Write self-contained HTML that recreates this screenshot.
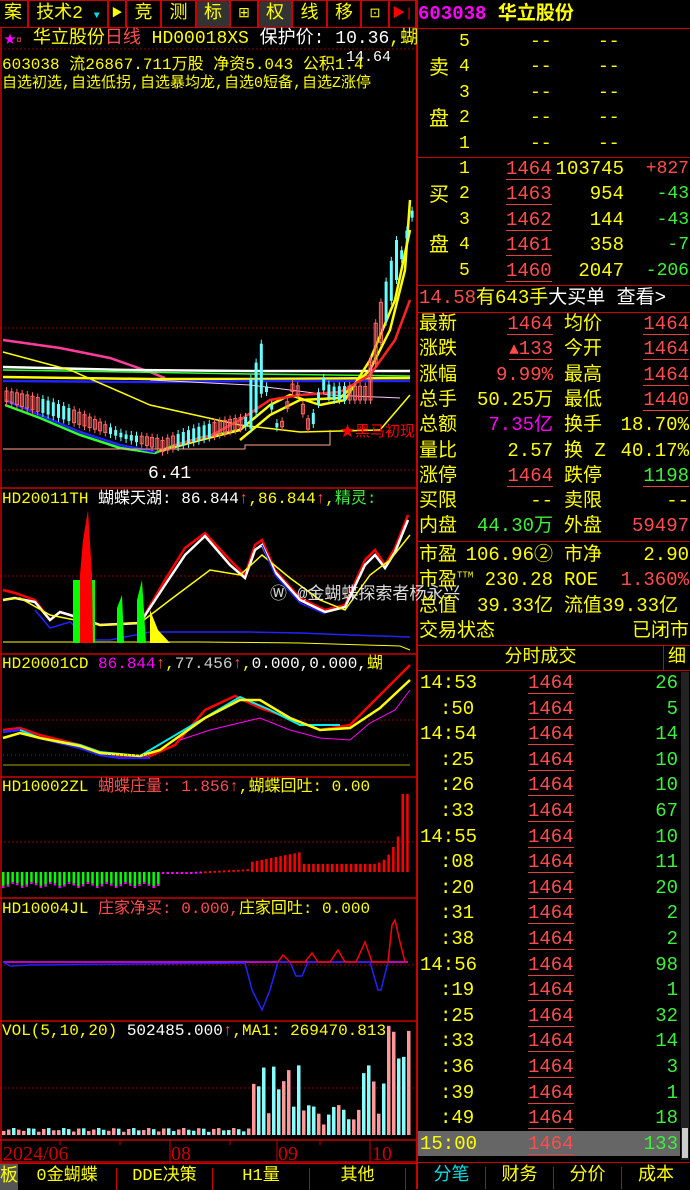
<!DOCTYPE html>
<html><head><meta charset="utf-8"><style>
*{margin:0;padding:0;box-sizing:border-box}
body{width:690px;height:1189px;background:#000;overflow:hidden;position:relative;font-family:"Liberation Mono","Noto Sans CJK SC",monospace;color:#ff0}
.a{position:absolute;white-space:nowrap;line-height:1}
.y{color:#ffff00}.r{color:#ff4c4c}.g{color:#3cf03c}.w{color:#fff}.m{color:#ff00ff}.c{color:#00e0e0}
.tb{position:absolute;top:0;height:28px;border:1px solid #c00;background:#000;color:#ff0;font-size:18px;text-align:center;line-height:26px}
.ul{border-bottom:1px solid #e04040}
</style></head><body>
<div class="tb" style="left:-2px;width:30px">案</div>
<div class="tb" style="left:28px;width:80px">技术2 <span class="c" style="font-size:10px">▼</span></div>
<div class="tb" style="left:108px;width:18px;font-size:11px">▶</div>
<div class="tb" style="left:126px;width:35px">竞</div>
<div class="tb" style="left:161px;width:35px">测</div>
<div class="tb" style="left:196px;width:34px;background:#333">标</div>
<div class="tb" style="left:230px;width:28px;font-size:14px">⊞</div>
<div class="tb" style="left:258px;width:34px;background:#333">权</div>
<div class="tb" style="left:292px;width:35px">线</div>
<div class="tb" style="left:327px;width:34px">移</div>
<div class="tb" style="left:361px;width:28px;font-size:13px">⊡</div>
<div class="tb" style="left:389px;width:27px;color:#f00;font-size:13px">▶|</div>
<div style="position:absolute;left:416px;top:0;width:2px;height:1189px;background:#c00"></div>

<svg style="position:absolute;left:0;top:0" width="416" height="1189">
<g stroke="#800" stroke-dasharray="2,2" stroke-width="1">
<line x1="0" y1="49" x2="416" y2="49"/><line x1="0" y1="328" x2="416" y2="328"/><line x1="0" y1="470" x2="416" y2="470"/>
<line x1="0" y1="576" x2="416" y2="576"/><line x1="0" y1="720" x2="416" y2="720"/><line x1="0" y1="842" x2="416" y2="842"/>
<line x1="0" y1="965" x2="416" y2="965"/><line x1="0" y1="1088" x2="416" y2="1088"/>
</g>
<g stroke="#c00" stroke-width="1.5">
<line x1="0" y1="488" x2="416" y2="488"/><line x1="0" y1="654" x2="416" y2="654"/><line x1="0" y1="777" x2="416" y2="777"/>
<line x1="0" y1="898" x2="416" y2="898"/><line x1="0" y1="1021" x2="416" y2="1021"/><line x1="0" y1="1140" x2="416" y2="1140"/>
<line x1="0" y1="1162" x2="416" y2="1162"/><line x1="1" y1="28" x2="1" y2="1162"/>
</g>
<g stroke="#c00" stroke-width="1">
<line x1="60" y1="1140" x2="60" y2="1145"/><line x1="120" y1="1140" x2="120" y2="1145"/><line x1="170" y1="1140" x2="170" y2="1162"/><line x1="230" y1="1140" x2="230" y2="1145"/><line x1="277" y1="1140" x2="277" y2="1162"/><line x1="320" y1="1140" x2="320" y2="1145"/><line x1="370" y1="1140" x2="370" y2="1162"/>
</g>
<g fill="none" stroke-width="2.5">
<polyline stroke="#ff3c9c" points="3,340 60,348 110,358 150,372 165,378"/>
<polyline stroke="#fff" points="3,367 130,370 250,371 410,371"/>
<polyline stroke="#3f3" stroke-width="1.5" points="3,370 130,372 250,374 410,376"/>
<polyline stroke="#ff0" points="3,377 150,379 250,379 410,378"/>
<polyline stroke="#22f" points="3,381 150,382 260,381 410,381"/>
<polyline stroke="#ff0" stroke-width="1.5" points="3,352 70,370 150,405 240,425 300,432 380,430 410,395"/>
<polyline stroke="#f8c8f8" stroke-width="1" points="150,380 250,385 330,395 400,398"/>
<polyline stroke="#3f3" points="5,405 40,418 80,435 120,448 155,453 175,445 200,438 240,430"/>
<polyline stroke="#22f" points="5,400 40,415 80,432 120,445 155,452"/>
<polyline stroke="#ff0" points="160,451 200,440 240,430 270,405 290,395 320,405 345,400 370,360 395,300 410,230"/>
<polyline stroke="#ff0" points="240,440 270,415 300,400 340,398 370,370 390,330 405,270 410,200"/>
<polyline stroke="#f22" points="175,445 210,436 240,420 270,400 300,395 340,392 370,375 395,340 410,300"/>
<polyline stroke="#fa8" stroke-width="1" points="3,449 245,449 245,445 330,445 330,430"/>
</g>
<g id="cand"></g>
<text x="148" y="478" fill="#fff" font-size="18" font-family="Liberation Mono">6.41</text>
<text x="340" y="436" fill="#f00" font-size="15" font-family="Noto Sans CJK SC">★黑马初现</text>
<g fill="none" stroke-width="2.5">
<polyline stroke="#f00" points="3,590 15,593 35,600 50,620 60,612 80,618 100,625 140,623 165,580 185,548 205,533 230,560 245,575 255,545 262,540 275,570 300,598 325,610 345,605 365,560 375,550 385,565 395,548 408,515"/>
<polyline stroke="#fff" points="3,600 15,598 35,602 50,620 60,612 80,618 100,625 140,623 165,585 185,555 205,536 230,565 245,578 255,550 262,545 275,572 300,600 325,612 345,607 365,565 375,555 385,568 395,552 408,520"/>
<polyline stroke="#ff0" stroke-width="1.5" points="3,600 20,598 50,615 100,625 140,623 170,600 210,570 240,575 262,555 290,578 320,600 345,610 370,575 390,560 410,535"/>
<polyline stroke="#22f" stroke-width="1.5" points="35,610 50,628 70,622 90,640 110,640 150,632 250,632 300,633 350,635 410,637"/>
<polyline stroke="#ff0" stroke-width="1" points="3,642 200,642 300,643 400,646 410,650"/>
<polyline stroke="#22f" stroke-width="1.5" points="262,545 275,575 300,603 325,614"/>
<polyline stroke="#f00" points="3,730 20,728 40,735 80,745 100,752 120,756 150,756 175,745 205,710 235,696 260,708 290,718 320,730 350,725 380,695 410,665"/>
<polyline stroke="#22f" points="3,732 20,730 40,738 80,748 100,755 120,758 150,758"/>
<polyline stroke="#0ee" stroke-width="2" points="20,730 40,738 80,745 100,752 140,756 240,697 270,710 300,725 340,725"/>
<polyline stroke="#ff0" points="3,738 20,733 40,738 80,746 100,753 140,756 160,750 205,718 240,700 260,700 290,718 320,730 350,728 380,708 410,680"/>
<polyline stroke="#f0f" stroke-width="1" points="180,740 210,730 260,718 290,730 320,738 350,740 370,723 395,710 410,690"/>
<line x1="3" y1="765" x2="410" y2="765" stroke="#aa0" stroke-width="1"/>
<line x1="3" y1="755" x2="410" y2="755" stroke="#22f" stroke-width="1" stroke-dasharray="1,3"/>
<line x1="3" y1="962" x2="408" y2="962" stroke="#f0f" stroke-width="1.5"/>
<polyline stroke="#22f" stroke-width="1.5" points="3,962 10,966 30,965 245,963 252,990 262,1010 270,990 278,962 290,962 296,976 302,976 308,962 370,962 378,990 381,990 388,962"/>
<polyline stroke="#f00" stroke-width="1.5" points="278,962 283,955 290,962 305,962 312,953 318,962 330,962 338,950 345,962 356,962 365,942 372,962 388,962 392,925 395,920 400,942 405,962"/>
</g>
<polygon points="73,643 73,580 95,580 95,643" fill="#0f0"/>
<polygon points="80,643 80,575 83,540 88,510 92,575 93,643" fill="#f00"/>
<polygon points="117,643 117,608 122,595 124,643" fill="#0f0"/>
<polygon points="137,643 137,600 142,580 146,643" fill="#0f0"/>
<polygon points="150,643 150,610 158,630 170,643" fill="#ff0"/>
<g id="bars"></g>
<g fill="#c00" font-size="20" font-family="Liberation Serif"><text x="3" y="1160">2024/06</text><text x="171" y="1160">08</text><text x="278" y="1160">09</text><text x="372" y="1160">10</text></g>
</svg>
<div class="a" style="left:4px;top:30px;font-size:18px"><span class="m" style="font-size:12px">★</span><span class="r" style="font-size:10px">¤</span> 华立股份<span class="r">日线</span> HD00018XS <span class="w">保护价: 10.36</span>,蝴</div>
<div class="a w" style="left:346px;top:50px;font-size:15px">14.64</div>
<div class="a" style="left:2px;top:57px;font-size:16px">603038 流26867.711万股 净资5.043 公积1.4</div>
<div class="a" style="left:2px;top:76px;font-size:15px">自选初选,自选低拐,自选暴均龙,自选0短备,自选Z涨停</div>
<div class="a" style="left:2px;top:491px;font-size:16px">HD20011TH <span class="w">蝴蝶天湖: 86.844</span><span class="r">↑</span>,86.844<span class="r">↑</span>,<span class="g">精灵:</span></div>
<div class="a" style="left:2px;top:656px;font-size:16px">HD20001CD <span class="m">86.844</span><span class="r">↑</span>,<span style="color:#ccc">77.456</span><span class="r">↑</span>,<span class="w">0.000,0.000,</span>蝴</div>
<div class="a" style="left:2px;top:779px;font-size:16px">HD10002ZL <span class="r">蝴蝶庄量: 1.856</span><span class="r">↑</span>,蝴蝶回吐: 0.00</div>
<div class="a" style="left:2px;top:901px;font-size:16px">HD10004JL <span class="r">庄家净买: 0.000,</span>庄家回吐: 0.000</div>
<div class="a" style="left:2px;top:1023px;font-size:16px">VOL(5,10,20) <span class="w">502485.000</span><span class="r">↑</span>,MA1: 269470.813</div>
<div class="a w" style="left:270px;top:587px;font-size:17px;opacity:.85">Ⓦ @金蝴蝶探索者杨永兴</div>
<div style="position:absolute;left:0;top:1163px;width:416px;height:26px;border-top:1px solid #c00">
<div class="a" style="left:0;top:0;width:18px;height:26px;background:#555;font-size:18px;line-height:26px">板</div>
<div class="a" style="left:18px;top:4px;width:99px;text-align:center;font-size:17px;border-right:1px solid #c00;height:22px">0金蝴蝶</div>
<div class="a" style="left:117px;top:4px;width:96px;text-align:center;font-size:17px;border-right:1px solid #c00;height:22px">DDE决策</div>
<div class="a" style="left:213px;top:4px;width:97px;text-align:center;font-size:17px;border-right:1px solid #c00;height:22px">H1量</div>
<div class="a" style="left:310px;top:4px;width:96px;text-align:center;font-size:17px;border-right:1px solid #c00;height:22px">其他</div>
</div>

<div class="a" style="left:418px;top:5px;font-size:19px;font-weight:bold"><span class="m">603038</span> 华立股份</div>
<div style="position:absolute;left:418px;top:28px;width:272px;height:1px;background:#c00"></div>
<div id="ob"></div>
<div style="position:absolute;left:418px;top:285px;width:272px;height:1px;background:#c00"></div>
<div class="a" style="left:419px;top:289px;font-size:19px"><span class="r">14.58</span>有643手<span class="w">大买单 查看&gt;</span></div>
<div style="position:absolute;left:418px;top:312px;width:272px;height:1px;background:#c00"></div>
<div id="st"></div>
<div style="position:absolute;left:418px;top:541px;width:272px;height:1px;background:#c00"></div>
<div style="position:absolute;left:418px;top:645px;width:272px;height:1px;background:#c00"></div>
<div class="a" style="left:418px;top:646px;width:245px;text-align:center;font-size:18px;line-height:24px">分时成交</div>
<div class="a" style="left:663px;top:646px;width:27px;border-left:1px solid #c00;text-align:center;font-size:18px;line-height:24px">细</div>
<div style="position:absolute;left:418px;top:670px;width:272px;height:1px;background:#c00"></div>
<div style="position:absolute;left:418px;top:1131px;width:262px;height:25px;background:#666"></div>
<div style="position:absolute;left:681px;top:672px;width:8px;height:488px;background:#222"></div>
<div style="position:absolute;left:682px;top:1128px;width:6px;height:30px;background:#ccc"></div>
<div id="tk"></div>
<div style="position:absolute;left:418px;top:1162px;width:272px;height:27px;border-top:1px solid #c00">
<div class="a c" style="left:0;top:4px;width:68px;text-align:center;font-size:18px;border-right:1px solid #c00;height:22px">分笔</div>
<div class="a" style="left:68px;top:4px;width:68px;text-align:center;font-size:18px;border-right:1px solid #c00;height:22px">财务</div>
<div class="a" style="left:136px;top:4px;width:68px;text-align:center;font-size:18px;border-right:1px solid #c00;height:22px">分价</div>
<div class="a" style="left:204px;top:4px;width:68px;text-align:center;font-size:18px;height:22px">成本</div>
</div>
<script>
var h='';
var L=['5','4','3','2','1'];
h+='<div class="a" style="left:429px;top:60px;font-size:20px">卖</div><div class="a" style="left:429px;top:111px;font-size:20px">盘</div>';
for(var i=0;i<5;i++){var t=33+i*25.4;h+='<div class="a" style="left:459px;top:'+t+'px;font-size:18px">'+L[i]+'</div><div class="a" style="left:530px;top:'+t+'px;font-size:18px">--</div><div class="a" style="left:598px;top:'+t+'px;font-size:18px">--</div>';}
h+='<div style="position:absolute;left:418px;top:157px;width:272px;height:1px;background:#c00"></div>';
h+='<div class="a" style="left:429px;top:187px;font-size:20px">买</div><div class="a" style="left:429px;top:237px;font-size:20px">盘</div>';
var B=[['1464','103745','+827'],['1463','954','-43'],['1462','144','-43'],['1461','358','-7'],['1460','2047','-206']];
for(i=0;i<5;i++){var t=160+i*25.4;h+='<div class="a" style="left:459px;top:'+t+'px;font-size:18px">'+(i+1)+'</div><div class="a r ul" style="left:506px;top:'+t+'px;font-size:19px">'+B[i][0]+'</div><div class="a" style="right:66px;top:'+t+'px;font-size:19px">'+B[i][1]+'</div><div class="a '+(i?'g':'r')+'" style="right:1px;top:'+t+'px;font-size:18px">'+B[i][2]+'</div>';}
document.getElementById('ob').innerHTML=h;
h='';
var S=[['最新','1464','r ul','均价','1464','r ul'],['涨跌','▴133','r ul','今开','1464','r ul'],['涨幅','9.99%','r','最高','1464','r ul'],['总手','50.25万','y','最低','1440','r ul'],['总额','7.35亿','m','换手','18.70%','y'],['量比','2.57','y','换 Z','40.17%','y'],['涨停','1464','r ul','跌停','1198','g ul'],['买限','--','y','卖限','--','y'],['内盘','44.30万','g','外盘','59497','r'],['市盈','106.96②','y','市净','2.90','y'],['市盈<sup style="font-size:9px">TTM</sup>','230.28','y','ROE','1.360%','r'],['总值','39.33亿','y','流值39.33亿','','y'],['交易状态','','y','','已闭市','y']];
for(i=0;i<S.length;i++){var t=(i<9?315+i*25.3:546+(i-9)*25.3);var s=S[i];
h+='<div class="a" style="left:419px;top:'+t+'px;font-size:19px">'+s[0]+'</div><div class="a '+s[2]+'" style="right:137px;top:'+t+'px;font-size:19px">'+s[1]+'</div><div class="a" style="left:564px;top:'+t+'px;font-size:19px">'+s[3]+'</div><div class="a '+s[5]+'" style="right:1px;top:'+t+'px;font-size:19px">'+s[4]+'</div>';}
document.getElementById('st').innerHTML=h;
h='';
var T=['14:53',':50','14:54',':25',':26',':33','14:55',':08',':20',':31',':38','14:56',':19',':25',':33',':36',':39',':49','15:00'];
var V=[26,5,14,10,10,67,10,11,20,2,2,98,1,32,14,3,1,18,133];
for(i=0;i<19;i++){var t=674+i*25.6;h+='<div class="a" style="left:'+(T[i].length>3?420:440)+'px;top:'+t+'px;font-size:19px">'+T[i]+'</div><div class="a r ul" style="left:528px;top:'+t+'px;font-size:19px">1464</div><div class="a g" style="right:12px;top:'+t+'px;font-size:19px">'+V[i]+'</div>';}
document.getElementById('tk').innerHTML=h;
var s='';
function R(x,y,w,hh,c,st){s+='<rect x="'+x+'" y="'+y+'" width="'+w+'" height="'+hh+'" fill="'+(st?'none':c)+'"'+(st?' stroke="'+c+'"':'')+'/>';}
for(var x=2;x<410;x+=4.7){var k=x;if(k<160){var d=12+Math.sin(k)*2;R(x,872,2.5,d,'#0f0');R(x,872+d,2.5,2,'#f0f');}
else if(k<250){R(x,872-Math.max(0,(k-190)/20),2.5,2,k<200?'#f0f':'#f00');}
else{var hh=k<300?10+(k-250)/5:(k<370?8:8+Math.pow((k-370)/40,2.5)*75);if(k>400)hh=78;R(x,872-hh,2.5,hh,'#f00');}}
for(x=2;x<410;x+=5){var v;if(x<250)v=3+Math.abs(Math.sin(x*1.7))*4;else if(x<300)v=20+Math.abs(Math.sin(x))*50;else if(x<360)v=10+Math.abs(Math.sin(x*2))*20;else v=20+Math.abs(Math.sin(x*3))*50+(x>385?40:0);
var red=Math.sin(x*0.9)>0;R(x,1135-v,3.5,v,red?'#f99':'#8ff',false);}
for(x=5;x<412;x+=5.2){var base=x<160?400+(x/160)*50:(x<245?452-(x-160)*0.3:(x<330?410-Math.sin(x)*20:(x<370?400:380-(x-370)*4)));
var hh2=4+Math.abs(Math.sin(x*3))*10;if(x>245&&x<262)hh2=50;if(x>365&&x<395)hh2=40;
var up=Math.sin(x*1.3)>0;s+='<line x1="'+(x+1.5)+'" y1="'+(base-hh2-4)+'" x2="'+(x+1.5)+'" y2="'+(base+4)+'" stroke="'+(up?'#f66':'#6ff')+'"/>';R(x,base-hh2,3,hh2,up?'#f66':'#6ff',up);}
document.getElementById('bars').innerHTML=s;
</script>
</body></html>
